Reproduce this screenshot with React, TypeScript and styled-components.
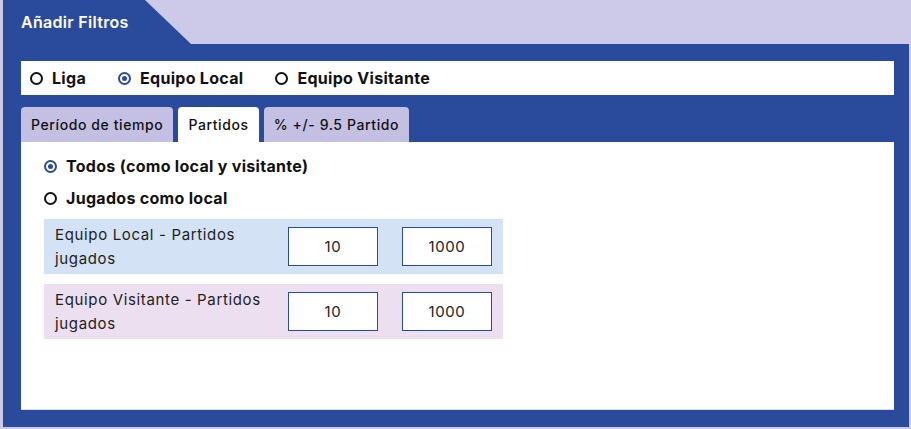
import React, { useState } from "react";
import styled, { createGlobalStyle } from "styled-components";

const BLUE = "#2a4b9b";
const LAV = "#cccae8";

const Global = createGlobalStyle`
  html, body { margin: 0; padding: 0; background: ${LAV}; }
  body { font-family: Inter, "DejaVu Sans", sans-serif; color: #111; }
  * { box-sizing: border-box; }
`;

const Page = styled.div`
  padding: 0 2px 2px 3px;
`;

const HeaderRow = styled.div`
  display: flex;
  height: 44px;
`;

const HeaderTab = styled.div`
  width: 188px;
  height: 44px;
  background: ${BLUE};
  clip-path: polygon(0 0, 142px 0, 100% 100%, 0 100%);
  color: #fff;
  font-size: 16px;
  font-weight: 600;
  letter-spacing: 0.3px;
  display: flex;
  align-items: center;
  padding: 0 0 0 18px;
`;

const Panel = styled.div`
  background: ${BLUE};
  padding: 17px 15px 17px 18px;
`;

const RadioBar = styled.div`
  background: #fff;
  height: 34px;
  display: flex;
  align-items: center;
  padding-left: 9px;
  gap: 32px;
`;

const RadioLabel = styled.label`
  display: flex;
  align-items: center;
  gap: 9px;
  font-size: 16px;
  font-weight: 700;
  letter-spacing: 0.3px;
  cursor: pointer;
`;

const Dot = styled.span<{ $on: boolean }>`
  width: 13px;
  height: 13px;
  border-radius: 50%;
  border: 2px solid ${(p) => (p.$on ? BLUE : "#111")};
  display: flex;
  align-items: center;
  justify-content: center;
  flex: none;
  &::after {
    content: "";
    width: 5px;
    height: 5px;
    border-radius: 50%;
    background: ${(p) => (p.$on ? BLUE : "transparent")};
  }
`;

const Tabs = styled.div`
  display: flex;
  gap: 5px;
  margin-top: 12px;
`;

const Tab = styled.button<{ $active: boolean }>`
  height: 35px;
  border: none;
  border-radius: 4px 4px 0 0;
  background: ${(p) => (p.$active ? "#fff" : "#c3c0e3")};
  font-family: inherit;
  font-size: 14px;
  font-weight: 500;
  letter-spacing: 0.6px;
  color: #111;
  padding: 0 10px;
  cursor: pointer;
`;

const Content = styled.div`
  background: #fff;
  height: 268px;
  border-bottom: 1px solid #dcdcdc;
  padding: 8px 23px 0 23px;
`;

const Option = styled.div`
  height: 32px;
  display: flex;
  align-items: center;
`;

const Rows = styled.div`
  display: flex;
  flex-direction: column;
  gap: 10px;
  margin-top: 5px;
  width: 459px;
`;

const Row = styled.div<{ $bg: string }>`
  background: ${(p) => p.$bg};
  height: 55px;
  display: flex;
  align-items: center;
  padding: 0 11px;
  gap: 24px;
`;

const RowLabel = styled.div`
  flex: 1;
  font-size: 15px;
  line-height: 24px;
  letter-spacing: 0.65px;
  color: #222;
  margin-right: -24px;
`;

const NumInput = styled.input`
  width: 90px;
  height: 39px;
  border: 1px solid ${BLUE};
  background: #fff;
  text-align: center;
  font-family: inherit;
  font-size: 15px;
  letter-spacing: 0.6px;
  color: #222;
  outline: none;
  padding: 0;
`;

export default function App() {
  const [team, setTeam] = useState("local");
  const [tab, setTab] = useState(1);
  const [mode, setMode] = useState("todos");
  const teams = [
    { id: "liga", label: "Liga" },
    { id: "local", label: "Equipo Local" },
    { id: "visit", label: "Equipo Visitante" },
  ];
  const tabs = ["Período de tiempo", "Partidos", "% +/- 9.5 Partido"];
  const rows = [
    { label: "Equipo Local - Partidos jugados", bg: "#d3e3f5", a: "10", b: "1000" },
    { label: "Equipo Visitante - Partidos jugados", bg: "#ecdff0", a: "10", b: "1000" },
  ];
  return (
    <Page>
      <Global />
      <HeaderRow>
        <HeaderTab>Añadir Filtros</HeaderTab>
      </HeaderRow>
      <Panel>
        <RadioBar>
          {teams.map((t) => (
            <RadioLabel key={t.id} onClick={() => setTeam(t.id)}>
              <Dot $on={team === t.id} />
              {t.label}
            </RadioLabel>
          ))}
        </RadioBar>
        <Tabs>
          {tabs.map((t, i) => (
            <Tab key={t} $active={tab === i} onClick={() => setTab(i)}>
              {t}
            </Tab>
          ))}
        </Tabs>
        <Content>
          <Option>
            <RadioLabel onClick={() => setMode("todos")}>
              <Dot $on={mode === "todos"} />
              Todos (como local y visitante)
            </RadioLabel>
          </Option>
          <Option>
            <RadioLabel onClick={() => setMode("local")}>
              <Dot $on={mode === "local"} />
              Jugados como local
            </RadioLabel>
          </Option>
          <Rows>
            {rows.map((r) => (
              <Row key={r.label} $bg={r.bg}>
                <RowLabel>{r.label}</RowLabel>
                <NumInput defaultValue={r.a} />
                <NumInput defaultValue={r.b} />
              </Row>
            ))}
          </Rows>
        </Content>
      </Panel>
    </Page>
  );
}
